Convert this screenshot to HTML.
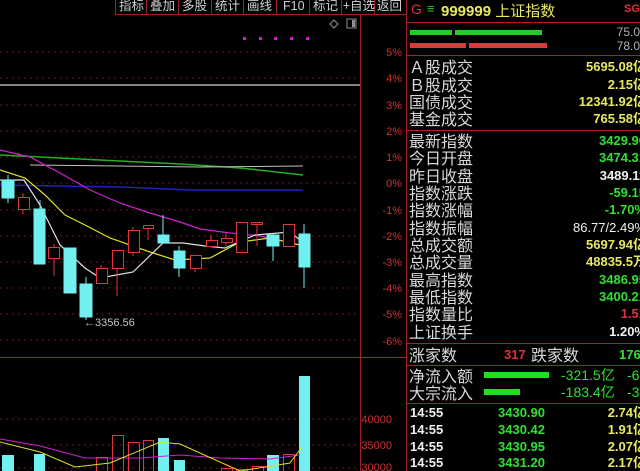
<!DOCTYPE html>
<html><head><meta charset="utf-8"><style>
body{margin:0;background:#000;width:640px;height:471px;overflow:hidden;position:relative;font-family:"Liberation Sans","Noto Sans CJK SC",sans-serif}
.t{position:absolute;white-space:nowrap}
.l{position:absolute;left:409px;font-size:16px;color:#d8d8d8;line-height:17px;font-family:"Noto Sans CJK SC",sans-serif}
.v{position:absolute;font-size:13px;font-weight:bold;line-height:17px;text-align:right;white-space:nowrap}
.y{color:#e8e860}.g{color:#30e030}.w{color:#f0f0f0}.r{color:#e03040}
</style></head><body>
<svg width="640" height="471" style="position:absolute;left:0;top:0" font-family="Liberation Sans, Noto Sans CJK SC, sans-serif">
<g stroke="#a02020" stroke-width="1">
<line x1="115" y1="14.5" x2="406" y2="14.5"/>
<line x1="115.5" y1="0" x2="115.5" y2="14"/><line x1="146.5" y1="0" x2="146.5" y2="14"/><line x1="178.5" y1="0" x2="178.5" y2="14"/><line x1="211.5" y1="0" x2="211.5" y2="14"/><line x1="243.5" y1="0" x2="243.5" y2="14"/><line x1="276.5" y1="0" x2="276.5" y2="14"/><line x1="309.5" y1="0" x2="309.5" y2="14"/><line x1="341.5" y1="0" x2="341.5" y2="14"/><line x1="374.5" y1="0" x2="374.5" y2="14"/>
</g>
<g fill="#d0d0d0" font-size="12.5" font-family="Noto Sans CJK SC, sans-serif">
<text x="119" y="10">指标</text><text x="150" y="10">叠加</text><text x="182" y="10">多股</text><text x="215" y="10">统计</text><text x="247" y="10">画线</text><text x="283" y="10" font-family="Liberation Sans">F10</text><text x="313" y="10">标记</text><text x="343" y="10">+自选</text><text x="377" y="10">返回</text>
</g>
<line x1="360.5" y1="15" x2="360.5" y2="471" stroke="#a02020"/>
<line x1="406.5" y1="0" x2="406.5" y2="471" stroke="#a02020"/>
<line x1="0" y1="357.5" x2="406" y2="357.5" stroke="#b02020"/>
<g stroke="#701818" stroke-dasharray="2,4">
<line x1="0" y1="52" x2="360" y2="52"/><line x1="0" y1="78" x2="360" y2="78"/><line x1="0" y1="105" x2="360" y2="105"/><line x1="0" y1="131" x2="360" y2="131"/><line x1="0" y1="157" x2="360" y2="157"/><line x1="0" y1="183" x2="360" y2="183"/><line x1="0" y1="210" x2="360" y2="210"/><line x1="0" y1="236" x2="360" y2="236"/><line x1="0" y1="262" x2="360" y2="262"/><line x1="0" y1="288" x2="360" y2="288"/><line x1="0" y1="314" x2="360" y2="314"/><line x1="0" y1="340" x2="360" y2="340"/>
<line x1="0" y1="419" x2="360" y2="419"/><line x1="0" y1="445" x2="360" y2="445"/><line x1="0" y1="468" x2="360" y2="468"/>
</g>
<g fill="#d03030" font-size="11" text-anchor="end">
<text x="402" y="56">5%</text><text x="402" y="82">4%</text><text x="402" y="109">3%</text><text x="402" y="135">2%</text><text x="402" y="161">1%</text><text x="402" y="187">0%</text><text x="402" y="214">-1%</text><text x="402" y="240">-2%</text><text x="402" y="266">-3%</text><text x="402" y="292">-4%</text><text x="402" y="318">-5%</text><text x="402" y="345">-6%</text>
<text x="392" y="423">40000</text><text x="392" y="449">35000</text><text x="392" y="471">30000</text>
</g>
<line x1="0" y1="85" x2="360" y2="85" stroke="#b0b0b0" stroke-width="1.5"/>
<g fill="#d020d0"><rect x="243" y="37" width="3" height="3"/><rect x="259" y="37" width="3" height="3"/><rect x="274" y="37" width="3" height="3"/><rect x="290" y="37" width="3" height="3"/><rect x="306" y="37" width="3" height="3"/></g>
<path d="M334 20 L338 24 L334 28 L330 24Z" fill="none" stroke="#909090"/>
<rect x="347" y="19" width="9" height="9" fill="none" stroke="#909090"/><rect x="352" y="20" width="3" height="7" fill="#909090"/>
<polyline fill="none" stroke="#20b020" stroke-width="1.5" points="0,155 60,158 120,161 180,164 240,168 303,175"/>
<polyline fill="none" stroke="#c0c0c0" points="30,165 120,166 200,167 303,166"/>
<polyline fill="none" stroke="#2020c0" stroke-width="1.5" points="0,185 60,186 120,187 190,190 303,190"/>
<polyline fill="none" stroke="#d020d0" stroke-width="1.2" points="0,150 30,157 60,173 90,190 120,203 150,213 180,222 200,229 230,233 260,236 300,245"/>
<polyline fill="none" stroke="#e0e020" stroke-width="1.2" points="0,170 25,178 45,195 65,215 85,225 110,238 150,252 175,260 210,258 240,242 270,238 300,245"/>
<polyline fill="none" stroke="#e0e0e0" stroke-width="1.2" points="0,180 24,180 40,205 60,245 85,268 100,278 133,272 163,243 183,243 205,246 225,248 255,235 290,232 300,240"/>
<g stroke="#70f0f0" fill="#70f0f0">
<line x1="8" y1="175" x2="8" y2="203"/><rect x="2" y="180" width="12" height="18"/>
<line x1="40" y1="200" x2="40" y2="264"/><rect x="34" y="209" width="11" height="55"/>
<rect x="64" y="248" width="12" height="45"/>
<line x1="86" y1="277" x2="86" y2="320"/><rect x="80" y="284" width="12" height="33"/>
<line x1="163" y1="215" x2="163" y2="243"/><rect x="158" y="235" width="11" height="8"/>
<line x1="179" y1="246" x2="179" y2="277"/><rect x="174" y="251" width="11" height="17"/>
<line x1="273" y1="234" x2="273" y2="261"/><rect x="267" y="235" width="12" height="11"/>
<line x1="304" y1="224" x2="304" y2="288"/><rect x="299" y="234" width="11" height="33"/>
</g>
<g stroke="#e03838" fill="#000">
<line x1="23" y1="193" x2="23" y2="214"/><rect x="18.5" y="197.5" width="11" height="12"/>
<line x1="54" y1="244" x2="54" y2="276"/><rect x="48.5" y="247.5" width="11" height="11"/>
<line x1="101" y1="265" x2="101" y2="283"/><rect x="96.5" y="268.5" width="11" height="15"/>
<line x1="117" y1="250" x2="117" y2="296"/><rect x="112.5" y="250.5" width="11" height="18"/>
<line x1="133" y1="227" x2="133" y2="256"/><rect x="128.5" y="230.5" width="11" height="22"/>
<line x1="148" y1="225" x2="148" y2="240"/><rect x="143.5" y="225.5" width="10" height="3"/>
<line x1="195" y1="255" x2="195" y2="272"/><rect x="190.5" y="255.5" width="11" height="13"/>
<line x1="211" y1="235" x2="211" y2="246"/><rect x="206.5" y="240.5" width="11" height="6"/>
<line x1="226" y1="233" x2="226" y2="246"/><rect x="221.5" y="238.5" width="11" height="4"/>
<rect x="236.5" y="222.5" width="11" height="30"/>
<line x1="257" y1="223" x2="257" y2="246"/><rect x="251.5" y="222.5" width="11" height="2"/>
<rect x="283.5" y="224.5" width="11" height="22"/>
</g>
<text x="84" y="326" fill="#c0c0c0" font-size="11">←3356.56</text>
<g fill="#70f0f0">
<rect x="2" y="455" width="12" height="16"/><rect x="34" y="454" width="11" height="17"/><rect x="158" y="438" width="11" height="33"/><rect x="174" y="460" width="11" height="11"/><rect x="267" y="455" width="12" height="16"/><rect x="299" y="376" width="11" height="95"/>
</g>
<g stroke="#e03838" fill="none">
<rect x="96.5" y="457.5" width="11" height="20"/><rect x="112.5" y="435.5" width="11" height="40"/><rect x="128.5" y="442.5" width="11" height="40"/><rect x="143.5" y="440.5" width="10" height="40"/><rect x="221.5" y="468.5" width="11" height="10"/><rect x="236.5" y="469.5" width="11" height="10"/><rect x="252.5" y="466.5" width="11" height="10"/><rect x="283.5" y="454.5" width="11" height="20"/>
</g>
<polyline fill="none" stroke="#d020d0" points="0,439 40,446 85,458 140,458 180,455 220,458 270,459 300,455"/>
<polyline fill="none" stroke="#e0e020" points="0,442 40,452 75,467 110,463 160,442 180,444 240,471 290,463 302,447"/>
<g stroke="#b02020">
<line x1="406" y1="22.5" x2="640" y2="22.5"/><line x1="406" y1="55.5" x2="640" y2="55.5"/><line x1="406" y1="130.5" x2="640" y2="130.5"/><line x1="406" y1="343.5" x2="640" y2="343.5"/><line x1="406" y1="365.5" x2="640" y2="365.5"/><line x1="406" y1="403.5" x2="640" y2="403.5"/>
</g>
<rect x="410" y="30" width="42" height="5" fill="#20d020"/><rect x="455" y="30" width="87" height="5" fill="#20d020"/>
<rect x="410" y="43" width="56" height="5" fill="#e03838"/><rect x="469" y="43" width="78" height="5" fill="#e03838"/>
<rect x="484" y="372" width="65" height="6" fill="#20e020"/><rect x="484" y="389" width="36" height="6" fill="#20e020"/>
</svg>
<div class="t" style="left:411px;top:1px;font-size:14px;color:#e03040">G</div>
<div class="t" style="left:427px;top:1px;font-size:13px;color:#30c030">≡</div>
<div class="t" style="left:441px;top:0px;font-size:15px;color:#e8e860;font-weight:bold">999999 <span style="font-family:'Noto Sans CJK SC';font-weight:normal">上证指数</span></div>
<div class="t" style="left:624px;top:3px;font-size:11px;color:#e03040;font-weight:bold">SG</div>
<div class="v" style="right:0;top:24px;color:#b0b0b0;font-weight:normal;font-size:12px">75.0</div>
<div class="v" style="right:0;top:38px;color:#b0b0b0;font-weight:normal;font-size:12px">78.0</div>
<div class="l" style="top:58px">Ａ股成交</div><div class="v y" style="right:-6px;top:58px">5695.08亿</div>
<div class="l" style="top:76px">Ｂ股成交</div><div class="v y" style="right:-6px;top:76px">2.15亿</div>
<div class="l" style="top:93px">国债成交</div><div class="v y" style="right:-6px;top:93px">12341.92亿</div>
<div class="l" style="top:110px">基金成交</div><div class="v y" style="right:-6px;top:110px">765.58亿</div>
<div class="l" style="top:132px">最新指数</div><div class="v g" style="right:-6px;top:132px">3429.96</div>
<div class="l" style="top:149px">今日开盘</div><div class="v g" style="right:-6px;top:149px">3474.31</div>
<div class="l" style="top:167px">昨日收盘</div><div class="v w" style="right:-6px;top:167px">3489.11</div>
<div class="l" style="top:184px">指数涨跌</div><div class="v g" style="right:-6px;top:184px">-59.15</div>
<div class="l" style="top:201px">指数涨幅</div><div class="v g" style="right:-6px;top:201px">-1.70%</div>
<div class="l" style="top:219px">指数振幅</div><div class="v w" style="right:-6px;top:219px;font-weight:normal">86.77/2.49%</div>
<div class="l" style="top:236px">总成交额</div><div class="v y" style="right:-6px;top:236px">5697.94亿</div>
<div class="l" style="top:253px">总成交量</div><div class="v y" style="right:-6px;top:253px">48835.5万</div>
<div class="l" style="top:271px">最高指数</div><div class="v g" style="right:-6px;top:271px">3486.95</div>
<div class="l" style="top:288px">最低指数</div><div class="v g" style="right:-6px;top:288px">3400.21</div>
<div class="l" style="top:305px">指数量比</div><div class="v r" style="right:-6px;top:305px">1.51</div>
<div class="l" style="top:323px">上证换手</div><div class="v w" style="right:-6px;top:323px">1.20%</div>
<div class="l" style="top:346px">涨家数</div><div class="v r" style="left:504px;top:346px">317</div><div class="l" style="left:531px;top:346px">跌家数</div><div class="v g" style="left:619px;top:346px">176</div>
<div class="l" style="top:367px">净流入额</div><div class="v g" style="left:561px;top:367px;font-weight:normal;font-size:14px">-321.5亿</div><div class="v g" style="left:627px;top:367px;font-weight:normal;font-size:14px">-6</div>
<div class="l" style="top:384px">大宗流入</div><div class="v g" style="left:561px;top:384px;font-weight:normal;font-size:14px">-183.4亿</div><div class="v g" style="left:627px;top:384px;font-weight:normal;font-size:14px">-3</div>
<div class="v w" style="left:410px;top:404px">14:55</div><div class="v g" style="left:498px;top:404px">3430.90</div><div class="v y" style="right:-6px;top:404px">2.74亿</div>
<div class="v w" style="left:410px;top:421px">14:55</div><div class="v g" style="left:498px;top:421px">3430.42</div><div class="v y" style="right:-6px;top:421px">1.91亿</div>
<div class="v w" style="left:410px;top:438px">14:55</div><div class="v g" style="left:498px;top:438px">3430.95</div><div class="v y" style="right:-6px;top:438px">2.07亿</div>
<div class="v w" style="left:410px;top:454px">14:55</div><div class="v g" style="left:498px;top:454px">3431.20</div><div class="v y" style="right:-6px;top:454px">2.17亿</div>
</body></html>
